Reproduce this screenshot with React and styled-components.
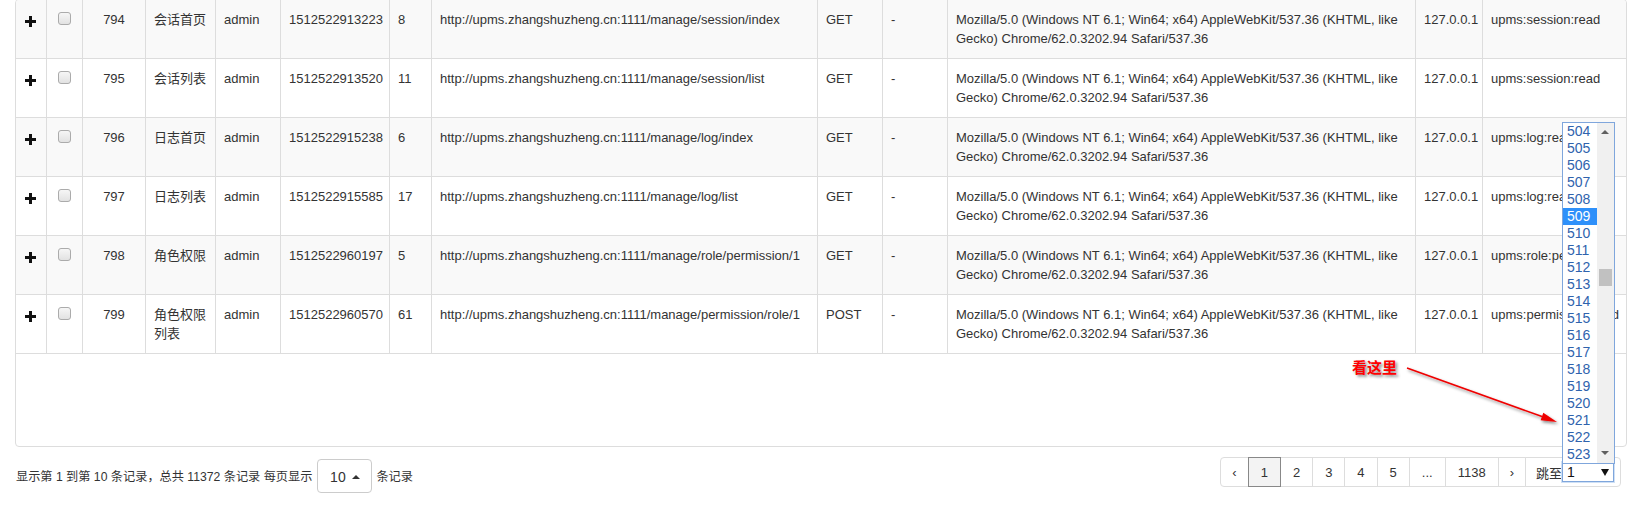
import React from "react";
import styled, { createGlobalStyle } from "styled-components";

const GlobalStyle = createGlobalStyle`
  html, body {
    margin: 0;
    padding: 0;
    background: #fff;
  }
  body {
    font-family: "Liberation Sans", Arial, "Noto Sans CJK SC", sans-serif;
    font-size: 13px;
    color: #333;
  }
  * {
    box-sizing: border-box;
  }
`;

const COLS = "30px 36px 63px 70px 65px 109px 42px 386px 65px 65px 468px 67px 1fr";

const Page = styled.div`
  position: relative;
  width: 1628px;
  height: 512px;
  overflow: hidden;
`;

const TableBox = styled.div`
  margin: -1px 0 0 15px;
  width: 1612px;
  height: 448px;
  border: 1px solid #ddd;
  border-radius: 4px;
  overflow: hidden;
`;

const Row = styled.div`
  display: grid;
  grid-template-columns: ${COLS};
  background: ${(p) => (p.$striped ? "#f9f9f9" : "#fff")};
  border-bottom: 1px solid #ddd;
`;

const Cell = styled.div`
  padding: 10px 8px;
  line-height: 19px;
  border-left: 1px solid #ddd;
  text-align: ${(p) => p.$align || "left"};
  white-space: ${(p) => (p.$nowrap ? "nowrap" : "normal")};
  overflow: hidden;
  &:first-child {
    border-left: 0;
  }
`;

const IconCell = styled(Cell)`
  display: flex;
  justify-content: center;
  align-items: flex-start;
`;

const PlusIcon = styled.svg`
  width: 11px;
  height: 11px;
  margin: 6px 2px 0 0;
`;

const CheckBox = styled.span`
  display: block;
  width: 13px;
  height: 13px;
  margin-top: 2px;
  border: 1px solid #ababab;
  border-radius: 3px;
  background: linear-gradient(#f6f6f6, #e2e2e2);
`;

const Footer = styled.div`
  display: flex;
  justify-content: space-between;
  align-items: flex-start;
  padding: 10px 7px 0 16px;
`;

const PageInfo = styled.div`
  display: flex;
  align-items: center;
  margin-top: 2px;
  font-size: 12.2px;
`;

const SizeButton = styled.div`
  display: flex;
  align-items: center;
  justify-content: center;
  gap: 6px;
  width: 55px;
  height: 34px;
  margin: 0 4px 0 5px;
  border: 1px solid #ccc;
  border-radius: 4px;
  background: #fff;
  font-size: 14px;
  padding-top: 1px;
`;

const CaretUp = styled.span`
  width: 0;
  height: 0;
  border-left: 4px solid transparent;
  border-right: 4px solid transparent;
  border-bottom: 4px solid #333;
`;

const Pager = styled.div`
  display: flex;
`;

const PageItem = styled.div`
  position: relative;
  z-index: ${(p) => (p.$active ? 2 : 1)};
  display: flex;
  align-items: center;
  height: 30px;
  padding: 0 ${(p) => p.$pad || 12}px;
  margin-left: -1px;
  border: 1px solid ${(p) => (p.$active ? "#888" : "#ddd")};
  background: ${(p) => (p.$active ? "#f3f3f3" : "#fff")};
  color: #333;
  &:first-child {
    margin-left: 0;
    border-radius: 4px 0 0 4px;
  }
  &:last-child {
    border-radius: 0 4px 4px 0;
  }
`;

const JumpItem = styled(PageItem)`
  padding: 0 6px 0 10px;
`;

const JumpSelect = styled.div`
  display: flex;
  align-items: center;
  justify-content: space-between;
  width: 52px;
  height: 20px;
  padding: 0 4px 0 4px;
  border: 1px solid #7fa6dc;
  box-shadow: 0 0 0 1px #cfe0f5;
  background: #fff;
  font-size: 14px;
  color: #111;
`;

const CaretDown = styled.span`
  width: 0;
  height: 0;
  border-left: 4px solid transparent;
  border-right: 4px solid transparent;
  border-top: 7px solid #111;
`;

const ListBox = styled.div`
  position: absolute;
  left: 1562px;
  top: 122px;
  width: 53px;
  height: 342px;
  display: flex;
  border: 1px solid #7fa6dc;
  background: #fff;
  z-index: 5;
`;

const Options = styled.div`
  flex: 1;
  display: flex;
  flex-direction: column;
`;

const Option = styled.div`
  height: 17px;
  line-height: 17px;
  padding-left: 4px;
  font-size: 14px;
  color: ${(p) => (p.$selected ? "#fff" : "#2f63ad")};
  background: ${(p) => (p.$selected ? "#2e90fa" : "transparent")};
`;

const ScrollTrack = styled.div`
  position: relative;
  width: 17px;
  background: #f0f0f0;
`;

const ScrollArrow = styled.span`
  position: absolute;
  left: 4px;
  ${(p) => (p.$down ? "bottom: 8px;" : "top: 7px;")}
  width: 0;
  height: 0;
  border-left: 4px solid transparent;
  border-right: 4px solid transparent;
  ${(p) => (p.$down ? "border-top: 4px solid #606060;" : "border-bottom: 4px solid #606060;")}
`;

const ScrollThumb = styled.span`
  position: absolute;
  left: 2px;
  top: 146px;
  width: 13px;
  height: 17px;
  background: #c1c1c1;
`;

const Note = styled.div`
  position: absolute;
  left: 1352px;
  top: 356px;
  font-family: "Noto Sans CJK SC", sans-serif;
  font-size: 15px;
  font-weight: 700;
  color: #f00;
  text-shadow: 2px 2px 3px rgba(0, 0, 0, 0.45);
  z-index: 6;
`;

const Arrow = styled.svg`
  position: absolute;
  left: 1395px;
  top: 355px;
  width: 175px;
  height: 80px;
  z-index: 6;
  overflow: visible;
`;

const UA =
  "Mozilla/5.0 (Windows NT 6.1; Win64; x64) AppleWebKit/537.36 (KHTML, like Gecko) Chrome/62.0.3202.94 Safari/537.36";
const HOST = "http://upms.zhangshuzheng.cn:1111";

const rows = [
  ["794", "会话首页", "1512522913223", "8", "/manage/session/index", "GET", "upms:session:read"],
  ["795", "会话列表", "1512522913520", "11", "/manage/session/list", "GET", "upms:session:read"],
  ["796", "日志首页", "1512522915238", "6", "/manage/log/index", "GET", "upms:log:read"],
  ["797", "日志列表", "1512522915585", "17", "/manage/log/list", "GET", "upms:log:read"],
  ["798", "角色权限", "1512522960197", "5", "/manage/role/permission/1", "GET", "upms:role:permission"],
  ["799", "角色权限列表", "1512522960570", "61", "/manage/permission/role/1", "POST", "upms:permission:read"],
];

const pages = ["‹", "1", "2", "3", "4", "5", "...", "1138", "›"];

const options = Array.from({ length: 20 }, (_, i) => 504 + i);

export default function App() {
  return (
    <Page>
      <GlobalStyle />
      <TableBox>
        {rows.map(([id, name, time, spend, path, method, perm], i) => (
          <Row key={id} $striped={i % 2 === 0}>
            <IconCell>
              <PlusIcon viewBox="0 0 11 11">
                <path d="M4 0h3v4h4v3H7v4H4V7H0V4h4z" fill="#111" />
              </PlusIcon>
            </IconCell>
            <IconCell>
              <CheckBox />
            </IconCell>
            <Cell $align="center">{id}</Cell>
            <Cell>{name}</Cell>
            <Cell>admin</Cell>
            <Cell>{time}</Cell>
            <Cell>{spend}</Cell>
            <Cell>{HOST + path}</Cell>
            <Cell>{method}</Cell>
            <Cell>-</Cell>
            <Cell>{UA}</Cell>
            <Cell>127.0.0.1</Cell>
            <Cell $nowrap>{perm}</Cell>
          </Row>
        ))}
      </TableBox>

      <Footer>
        <PageInfo>
          显示第 1 到第 10 条记录，总共 11372 条记录 每页显示
          <SizeButton>
            10 <CaretUp />
          </SizeButton>
          条记录
        </PageInfo>
        <Pager>
          {pages.map((p) => (
            <PageItem key={p} $active={p === "1"} $pad={p === "‹" || p === "›" ? 11 : 12}>
              {p}
            </PageItem>
          ))}
          <JumpItem>
            跳至
            <JumpSelect>
              1 <CaretDown />
            </JumpSelect>
          </JumpItem>
        </Pager>
      </Footer>

      <ListBox>
        <Options>
          {options.map((n) => (
            <Option key={n} $selected={n === 509}>
              {n}
            </Option>
          ))}
        </Options>
        <ScrollTrack>
          <ScrollArrow />
          <ScrollThumb />
          <ScrollArrow $down />
        </ScrollTrack>
      </ListBox>

      <Note>看这里</Note>
      <Arrow viewBox="0 0 175 80">
        <defs>
          <filter id="shadow" x="-20%" y="-50%" width="140%" height="200%">
            <feDropShadow dx="1.5" dy="2" stdDeviation="1.5" floodColor="#000" floodOpacity="0.45" />
          </filter>
        </defs>
        <g filter="url(#shadow)">
          <line x1="12" y1="13" x2="147" y2="61.6" stroke="#e00" strokeWidth="1.6" />
          <polygon points="162,67 145.6,65.3 148.3,57.8" fill="#e00" />
        </g>
      </Arrow>
    </Page>
  );
}
